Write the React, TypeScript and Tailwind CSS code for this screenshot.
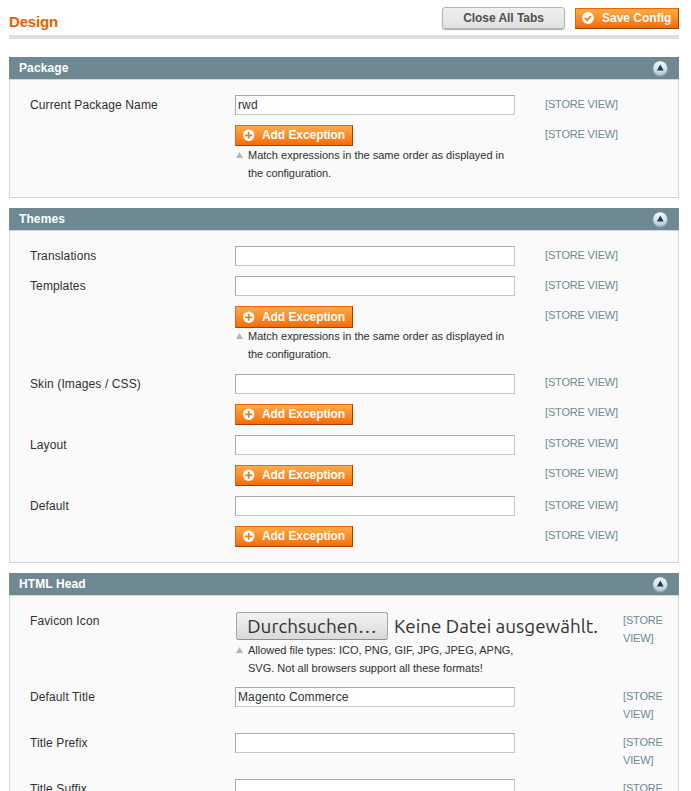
import type { ReactNode } from 'react';

const ORANGE =
  'flex items-center border border-t-[#ed6502] border-l-[#ed6502] border-r-[#a04300] border-b-[#a04300] bg-linear-to-b from-[#ffac47] via-[#fb8c27] to-[#f76a05] text-[12px] font-bold leading-[18px] text-white whitespace-nowrap';

function PlusIcon() {
  return (
    <svg width="12" height="12" viewBox="0 0 12 12" className="shrink-0">
      <circle cx="5.7" cy="6.3" r="5.7" fill="#fff" />
      <path d="M5.7 2.9v6.8M2.3 6.3h6.8" stroke="#ee7a1c" strokeWidth="1.7" fill="none" />
    </svg>
  );
}

function CheckIcon() {
  return (
    <svg width="12" height="12" viewBox="0 0 12 12" className="shrink-0">
      <circle cx="6" cy="6" r="5.9" fill="#fff" />
      <path d="M3 5.9l2.2 2.2L9 4" stroke="#ee7a1c" strokeWidth="1.8" fill="none" />
    </svg>
  );
}

function CollapseIcon() {
  return (
    <svg width="16" height="17" viewBox="0 0 16 17">
      <defs>
        <linearGradient id="knob" x1="0" y1="0" x2="0" y2="1">
          <stop offset="0" stopColor="#f4f8f9" />
          <stop offset="0.5" stopColor="#dae6ea" />
          <stop offset="1" stopColor="#b4cad1" />
        </linearGradient>
      </defs>
      <circle cx="8.2" cy="8.9" r="7.6" fill="#91a8b0" />
      <circle cx="8.2" cy="8.1" r="6.9" fill="url(#knob)" />
      <path d="M8.3 4.6l3.4 6H4.9z" fill="#183d50" />
    </svg>
  );
}

function AddButton({ tall = false }: { tall?: boolean }) {
  return (
    <button className={`${ORANGE} w-[118px] gap-[7px] pl-[7px] pb-px ${tall ? 'h-[22px]' : 'h-[21px]'}`}>
      <PlusIcon />
      <span className="tracking-[-0.07px]">Add Exception</span>
    </button>
  );
}

function Note({ children }: { children: ReactNode }) {
  return (
    <div className="flex pl-px text-[11px] leading-[18px] text-[#2f2f2f] whitespace-nowrap">
      <svg width="7" height="6" viewBox="0 0 7 6" className="mt-[6px] mr-[5px] shrink-0">
        <path d="M3.5 0L7 6H0z" fill="#a7babe" />
      </svg>
      <div>{children}</div>
    </div>
  );
}

function TextField({ value = '' }: { value?: string }) {
  return (
    <input
      defaultValue={value}
      className="block h-5 w-[280px] border border-t-[#aaa] border-l-[#aaa] border-r-[#c6c6c6] border-b-[#c6c6c6] bg-white px-[2px] text-[12px] tracking-[0.12px] text-[#2f2f2f] outline-none"
    />
  );
}

function Row({
  label,
  h,
  wide = false,
  up = false,
  children,
}: {
  label?: string;
  h: string;
  wide?: boolean;
  up?: boolean;
  children: ReactNode;
}) {
  return (
    <div className={`flex ${h}`}>
      <div className="w-[205px] shrink-0 pt-px text-[12px] leading-[18px] tracking-[0.12px] text-[#2f2f2f]">{label}</div>
      <div className={`shrink-0 ${wide ? 'w-[388px]' : 'w-[310px]'}`}>{children}</div>
      <div
        className={`text-[11px] leading-[18px] tracking-[-0.17px] text-[#6f8992] ${wide ? 'w-[46px]' : ''} ${up ? '-mt-px' : ''}`}
      >
        [STORE VIEW]
      </div>
    </div>
  );
}

function Section({ title, h, children }: { title: string; h: string; children: ReactNode }) {
  return (
    <section className="mb-[10px]">
      <header className="flex h-[22px] items-center justify-between bg-[#6f8992] pr-[11px] pl-[10px] text-white">
        <h4 className="text-[12px] leading-[18px] font-bold tracking-[0.1px]">{title}</h4>
        <CollapseIcon />
      </header>
      <div className={`border border-[#d6d6d6] bg-[#fafafa] pt-[15px] pl-5 ${h}`}>{children}</div>
    </section>
  );
}

const MatchNote = () => (
  <Note>
    Match expressions in the same order as displayed in
    <br />
    <span className="tracking-[-0.08px]">the configuration.</span>
  </Note>
);

export default function App() {
  return (
    <div className="h-[791px] w-[691px] overflow-hidden bg-white pr-3 pl-[9px] [font-family:'Liberation_Sans',Arial,sans-serif]">
      <div className="mb-[18px] flex h-[39px] items-start justify-between border-b-4 border-[#dfdfdf]">
        <h3 className="pt-[12px] text-[15px] leading-[20px] font-bold tracking-[-0.15px] text-[#eb5e00]">Design</h3>
        <div className="flex gap-[10px] pt-[7px]">
          <button className="flex h-[22px] w-[123px] items-center justify-center rounded-[3px] border border-[#b4b4b4] bg-linear-to-b from-[#f0f0f0] to-[#e1e1e1] text-[12px] font-bold tracking-[-0.05px] text-[#505050] shadow-[0_1px_1px_#aaa]">
            Close All Tabs
          </button>
          <button className={`${ORANGE} mt-px h-[21px] w-[104px] gap-2 pb-px pl-[6px]`}>
            <CheckIcon />
            <span>Save Config</span>
          </button>
        </div>
      </div>

      <Section title="Package" h="h-[119px]">
        <Row label="Current Package Name" h="h-[30px]">
          <TextField value="rwd" />
        </Row>
        <Row h="h-[57px]">
          <AddButton />
          <MatchNote />
        </Row>
      </Section>

      <Section title="Themes" h="h-[333px]">
        <Row label="Translations" h="h-[30px]">
          <TextField />
        </Row>
        <Row label="Templates" h="h-[30px]">
          <TextField />
        </Row>
        <Row h="h-[68px]">
          <AddButton tall />
          <div className="-mt-px">
            <MatchNote />
          </div>
        </Row>
        <Row label="Skin (Images / CSS)" h="h-[30px]" up>
          <TextField />
        </Row>
        <Row h="h-[31px]" up>
          <AddButton />
        </Row>
        <Row label="Layout" h="h-[30px]" up>
          <TextField />
        </Row>
        <Row h="h-[31px]" up>
          <AddButton />
        </Row>
        <Row label="Default" h="h-[30px]">
          <TextField />
        </Row>
        <Row h="h-[21px]">
          <AddButton />
        </Row>
      </Section>

      <Section title="HTML Head" h="h-[240px]">
        <Row label="Favicon Icon" h="h-[76px]" wide>
          <div className="flex h-[30px] items-center pl-px text-[18.9px] whitespace-nowrap text-[#333] [font-family:Ubuntu,'Noto_Sans',sans-serif]">
            <button className="flex h-[28px] w-[152px] items-center justify-center rounded-[3px] border border-[#a5a5a5] border-b-[#8c8c8c] bg-linear-to-b from-[#f2f2f2] to-[#d9d9d9]">
              Durchsuchen…
            </button>
            <span className="ml-[6px]">Keine Datei ausgewählt.</span>
          </div>
          <Note>
            <span className="tracking-[-0.01px]">Allowed file types: ICO, PNG, GIF, JPG, JPEG, APNG,</span>
            <br />
            SVG. Not all browsers support all these formats!
          </Note>
        </Row>
        <Row label="Default Title" h="h-[46px]" wide>
          <TextField value="Magento Commerce" />
        </Row>
        <Row label="Title Prefix" h="h-[46px]" wide>
          <TextField />
        </Row>
        <Row label="Title Suffix" h="h-[46px]" wide>
          <TextField />
        </Row>
      </Section>
    </div>
  );
}
